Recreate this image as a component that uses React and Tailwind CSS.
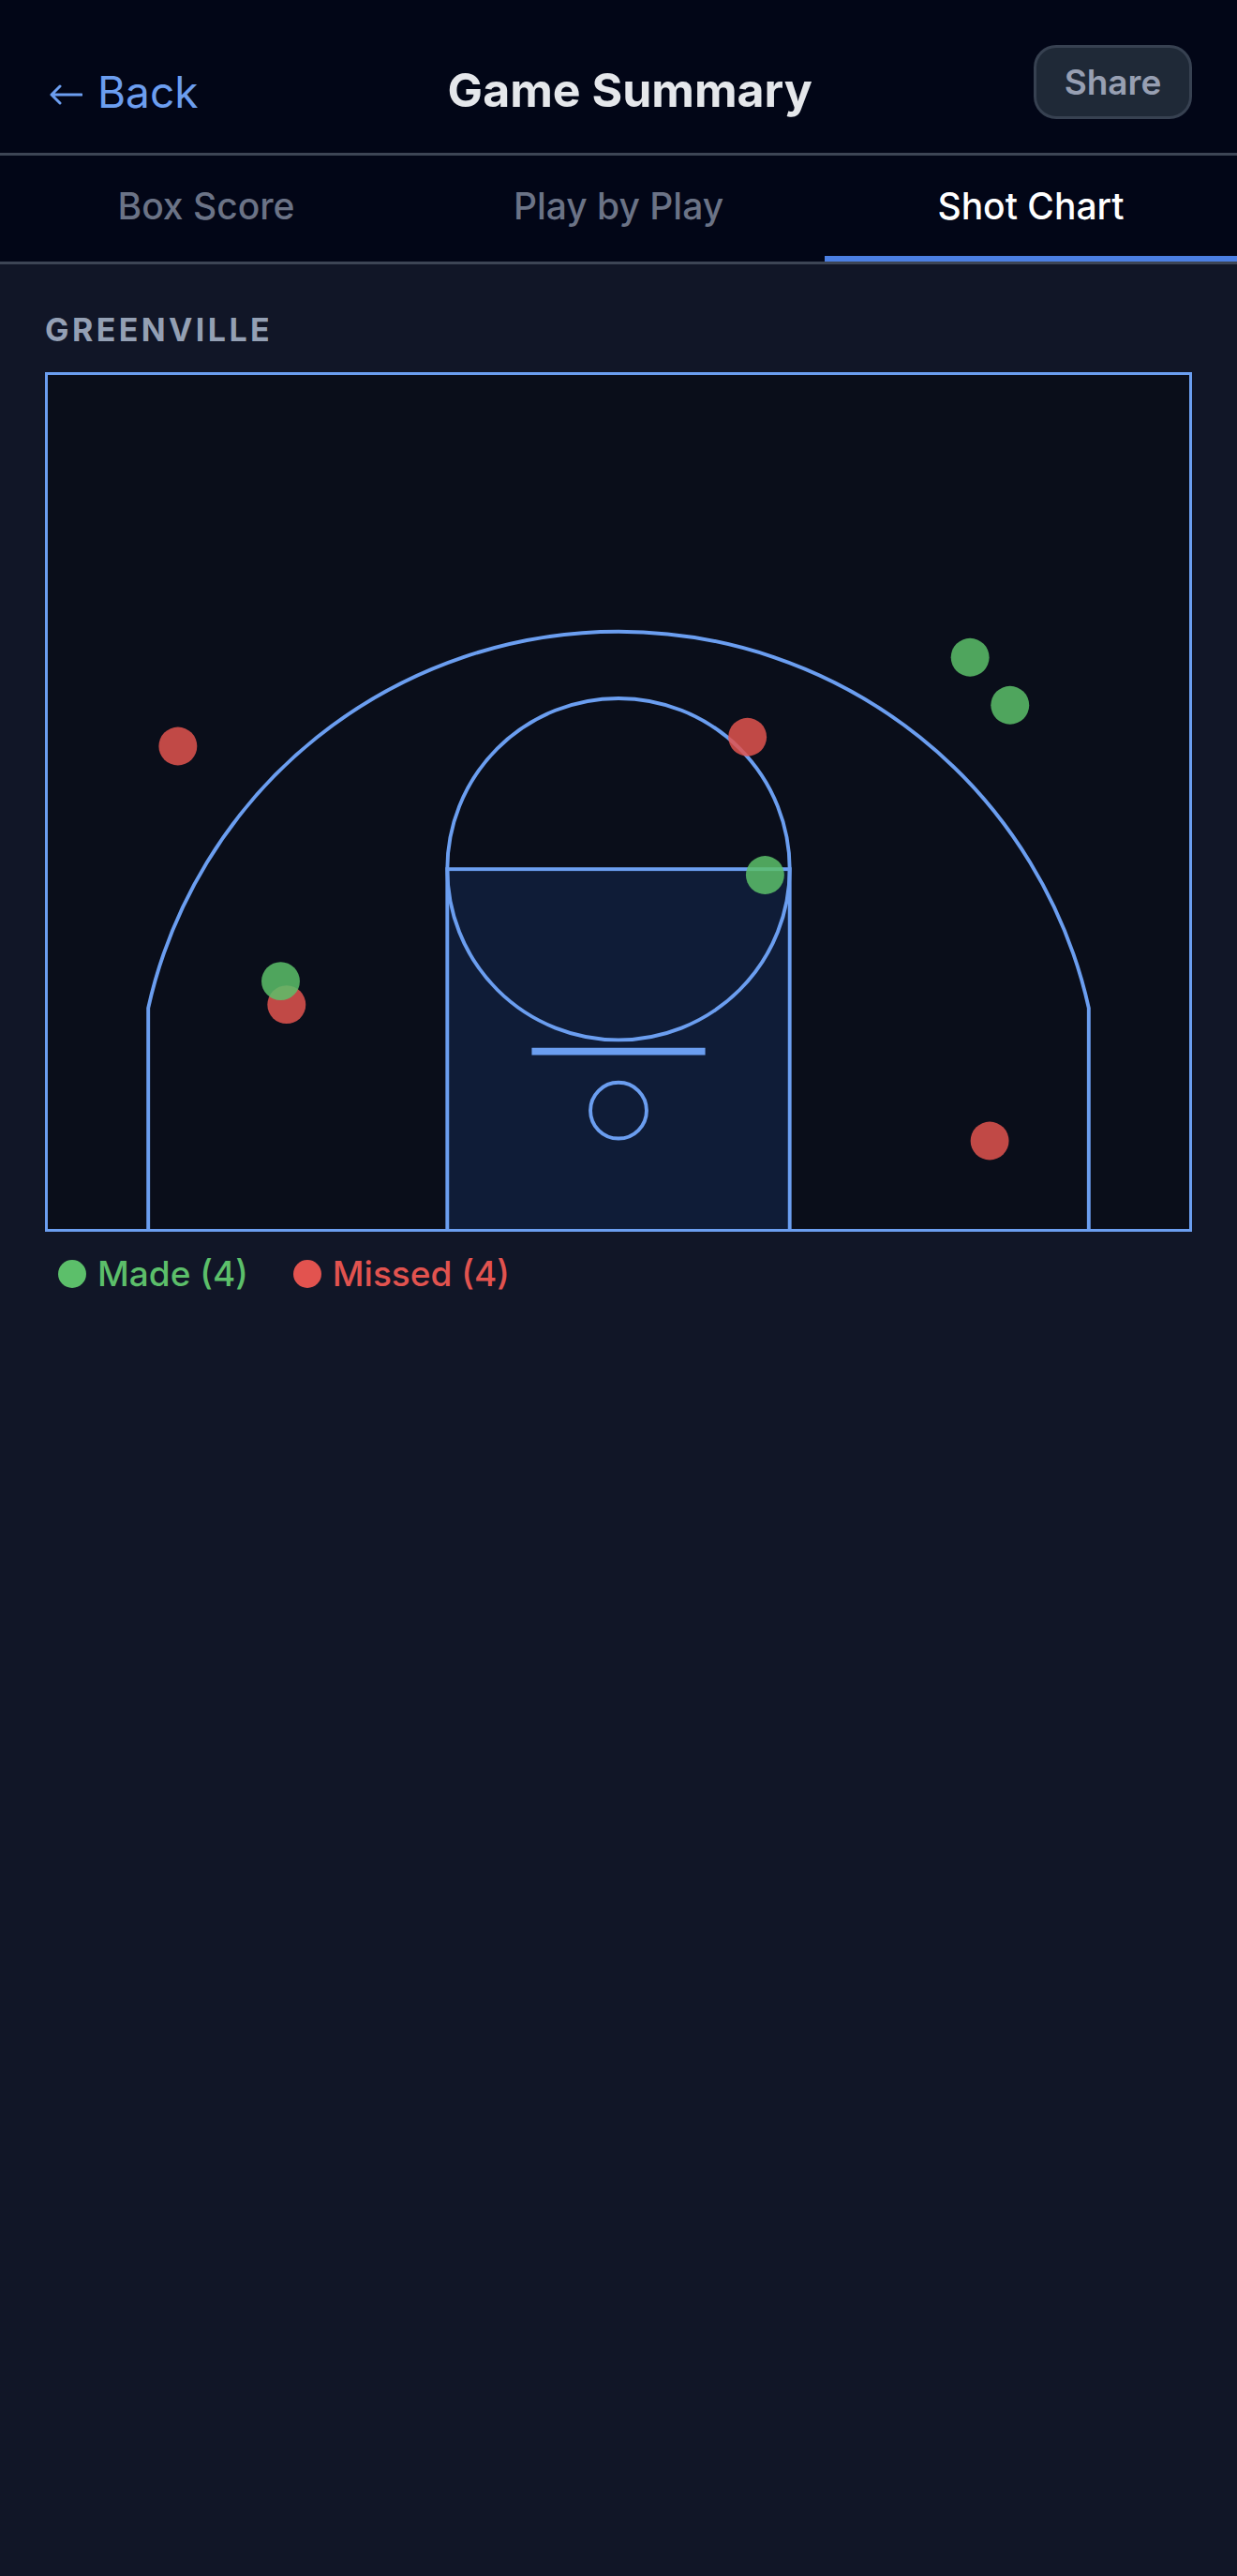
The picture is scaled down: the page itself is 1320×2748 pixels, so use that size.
import { useState } from 'react';

const TABS = ['Box Score', 'Play by Play', 'Shot Chart'];

const LINE = '#6b9ef0';

// shot positions in court units (500 x 375, basket at bottom)
const SHOTS = [
  { x: 57, y: 163, made: false },
  { x: 306.5, y: 159, made: false },
  { x: 104.6, y: 276.5, made: false },
  { x: 412.6, y: 336.3, made: false },
  { x: 404, y: 124, made: true },
  { x: 421.5, y: 145, made: true },
  { x: 314.2, y: 219.6, made: true },
  { x: 102, y: 266.2, made: true },
];

function Court() {
  return (
    <div className="border-[3px] border-[#6b9ef0] bg-[#0a0e1a]">
      <svg viewBox="0 0 500 375" preserveAspectRatio="none" className="block h-[911px] w-full">
        <rect x="175" y="217" width="150" height="160" fill="#0f1c37" stroke={LINE} strokeWidth="1.6" />
        <circle cx="250" cy="217" r="75" fill="none" stroke={LINE} strokeWidth="1.6" />
        <line x1="212" y1="297" x2="288" y2="297" stroke={LINE} strokeWidth="3.2" />
        <circle cx="250" cy="323" r="12.3" fill="none" stroke={LINE} strokeWidth="1.6" />
        <path d="M44 377V278A211 211 0 0 1 456 278V377" fill="none" stroke={LINE} strokeWidth="1.6" />
        {SHOTS.map((s, i) => (
          <circle
            key={i}
            cx={s.x}
            cy={s.y}
            r="8.4"
            fill={s.made ? '#5cbf6a' : '#e2534f'}
            fillOpacity="0.85"
          />
        ))}
      </svg>
    </div>
  );
}

export default function App() {
  const [tab, setTab] = useState('Shot Chart');
  const made = SHOTS.filter((s) => s.made).length;
  const missed = SHOTS.length - made;

  return (
    <div className="min-h-screen w-full bg-[#111627] font-[Inter,'Liberation_Sans',sans-serif] antialiased">
      <header className="flex h-[166px] items-start border-b-[3px] border-[#3d4555] bg-[#020617] px-[48px]">
        <button className="mt-[75px] flex items-center gap-[16px] text-[46px] leading-none text-[#6c9ef0]">
          <svg viewBox="0 0 40 24" className="h-[24px] w-[40px] translate-y-[3px]" fill="none" stroke="#6c9ef0" strokeWidth="3" strokeLinecap="round" strokeLinejoin="round">
            <path d="M39 12H7M16 3L7 12L16 21" />
          </svg>
          <span>Back</span>
        </button>
        <h1 className="mt-[71px] flex-1 pl-[30px] text-center text-[50px] font-bold leading-none text-[#e5e7eb]">
          Game Summary
        </h1>
        <button className="mt-[48px] flex h-[79px] w-[169px] items-center justify-center rounded-[24px] border-[3px] border-[#374151] bg-[#1f2937] text-[37px] font-semibold text-[#979fb2]">
          Share
        </button>
      </header>

      <nav className="flex h-[116px] border-b-[3px] border-[#3d4555] bg-[#020617]">
        {TABS.map((t) => (
          <button
            key={t}
            onClick={() => setTab(t)}
            className={`relative flex flex-1 items-center justify-center pb-[4px] text-[39px] font-medium ${
              tab === t ? 'text-white' : 'text-[#6b7386]'
            }`}
          >
            {t}
            {tab === t && <span className="absolute inset-x-0 bottom-0 h-[6px] bg-[#4b7fe3]" />}
          </button>
        ))}
      </nav>

      <main className="px-[48px] pt-[53px]">
        <p className="mb-[28px] text-[34px] font-bold uppercase leading-none tracking-[0.1em] text-[#94a0b4]">
          Greenville
        </p>
        <Court />
        <div className="mt-[26px] flex items-center gap-[48px] pl-[14px] text-[37px] font-medium leading-none">
          <div className="flex items-center gap-[12px] text-[#5cbf6a]">
            <span className="h-[30px] w-[30px] rounded-full bg-[#5cbf6a]" />
            Made ({made})
          </div>
          <div className="flex items-center gap-[12px] text-[#e2534f]">
            <span className="h-[30px] w-[30px] rounded-full bg-[#e2534f]" />
            Missed ({missed})
          </div>
        </div>
      </main>
    </div>
  );
}
